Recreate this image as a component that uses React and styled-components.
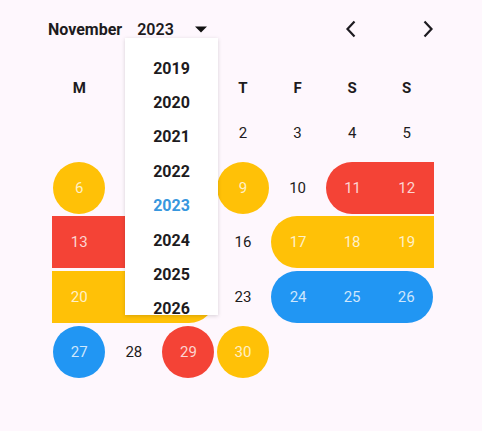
import React from "react";
import styled, { createGlobalStyle, css } from "styled-components";

const GlobalStyle = createGlobalStyle`
  html, body {
    margin: 0;
    padding: 0;
    background: #fef7fd;
    font-family: Roboto, "Noto Sans", sans-serif;
  }
`;

const COLORS = {
  yellow: "#ffc107",
  red: "#f44336",
  blue: "#2196f3",
};

const WEEKDAYS = ["M", "T", "W", "T", "F", "S", "S"];
const YEARS = [2019, 2020, 2021, 2022, 2023, 2024, 2025, 2026];

// marks for November 2023: [color, shape]
const MARKS = {
  6: ["yellow", "circle"],
  9: ["yellow", "circle"],
  11: ["red", "start"],
  12: ["red", "mid"],
  13: ["red", "mid"],
  14: ["red", "end"],
  17: ["yellow", "start"],
  18: ["yellow", "mid"],
  19: ["yellow", "mid"],
  20: ["yellow", "mid"],
  21: ["yellow", "mid"],
  22: ["yellow", "end"],
  24: ["blue", "start"],
  25: ["blue", "mid"],
  26: ["blue", "end"],
  27: ["blue", "circle"],
  29: ["red", "circle"],
  30: ["yellow", "circle"],
};

// Styled Components
const Page = styled.div`
  padding: 16px 42px 0 48px;
`;

const Header = styled.div`
  position: relative;
  display: flex;
  align-items: center;
  justify-content: space-between;
  height: 26px;
`;

const Title = styled.div`
  display: flex;
  align-items: center;
  color: #1d1b20;
  font-size: 16px;
`;

const Month = styled.span`
  font-weight: 700;
  margin-right: 15px;
`;

const Year = styled.span`
  font-weight: 600;
  margin-right: 20px;
`;

const Nav = styled.div`
  display: flex;
  gap: 53px;
`;

const NavButton = styled.button`
  width: 24px;
  height: 24px;
  padding: 0;
  border: none;
  background: none;
  display: flex;
  align-items: center;
  justify-content: center;
  color: #1d1b20;
`;

const YearMenu = styled.div`
  position: absolute;
  left: 77px;
  top: 22px;
  width: 93px;
  height: 277px;
  padding-top: 13px;
  box-sizing: border-box;
  overflow: hidden;
  background: #ffffff;
  box-shadow: 0 1px 4px rgba(0, 0, 0, 0.16);
  z-index: 2;
`;

const YearItem = styled.div`
  height: 34.4px;
  display: flex;
  align-items: center;
  justify-content: center;
  font-size: 16px;
  font-weight: 700;
  color: ${(p) => (p.$active ? "#3797de" : "#1d1b20")};
`;

const Grid = styled.div`
  display: grid;
  grid-template-columns: repeat(7, 1fr);
  grid-auto-rows: 54.57px;
  width: 382px;
  margin-left: 4px;
`;

const WeekRow = styled.div`
  display: grid;
  grid-template-columns: repeat(7, 1fr);
  width: 382px;
  height: 36px;
  margin: 28px 0 0 4px;
`;

const WeekLabel = styled.div`
  display: flex;
  align-items: center;
  justify-content: center;
  font-size: 15px;
  font-weight: 700;
  color: #1d1b20;
`;

const Cell = styled.div`
  display: flex;
  align-items: center;
  justify-content: center;
`;

const shapes = {
  circle: css`
    width: 52px;
    border-radius: 50%;
  `,
  start: css`
    width: 100%;
    margin-left: 1px;
    border-radius: 26px 0 0 26px;
  `,
  mid: css`
    width: 100%;
  `,
  end: css`
    width: 100%;
    margin-right: 1px;
    border-radius: 0 26px 26px 0;
  `,
};

const Day = styled.div`
  height: 52px;
  width: 52px;
  display: flex;
  align-items: center;
  justify-content: center;
  font-size: 15px;
  color: #1d1b20;
  ${(p) =>
    p.$color &&
    css`
      background: ${COLORS[p.$color]};
      color: rgba(255, 255, 255, 0.78);
    `}
  ${(p) => p.$shape && shapes[p.$shape]}
`;

const Caret = () => (
  <svg width="14" height="7" viewBox="0 0 14 7">
    <path d="M1 0.5h12L7 6.5z" fill="#111" />
  </svg>
);

const Chevron = ({ right }) => (
  <svg width="12" height="18" viewBox="0 0 12 18">
    <polyline
      points={right ? "2.5,1.5 9.5,9 2.5,16.5" : "9.5,1.5 2.5,9 9.5,16.5"}
      fill="none"
      stroke="#1d1b20"
      strokeWidth="2.2"
    />
  </svg>
);

const App = () => {
  const cells = [null, null];
  for (let d = 1; d <= 30; d++) cells.push(d);

  return (
    <Page>
      <GlobalStyle />
      <Header>
        <Title>
          <Month>November</Month>
          <Year>2023</Year>
          <Caret />
        </Title>
        <Nav>
          <NavButton>
            <Chevron />
          </NavButton>
          <NavButton>
            <Chevron right />
          </NavButton>
        </Nav>
        <YearMenu>
          {YEARS.map((y) => (
            <YearItem key={y} $active={y === 2023}>
              {y}
            </YearItem>
          ))}
        </YearMenu>
      </Header>
      <WeekRow>
        {WEEKDAYS.map((w, i) => (
          <WeekLabel key={i}>{w}</WeekLabel>
        ))}
      </WeekRow>
      <Grid>
        {cells.map((d, i) => {
          const mark = d ? MARKS[d] : null;
          return (
            <Cell key={i}>
              {d && (
                <Day $color={mark?.[0]} $shape={mark?.[1]}>
                  {d}
                </Day>
              )}
            </Cell>
          );
        })}
      </Grid>
    </Page>
  );
};

export default App;
